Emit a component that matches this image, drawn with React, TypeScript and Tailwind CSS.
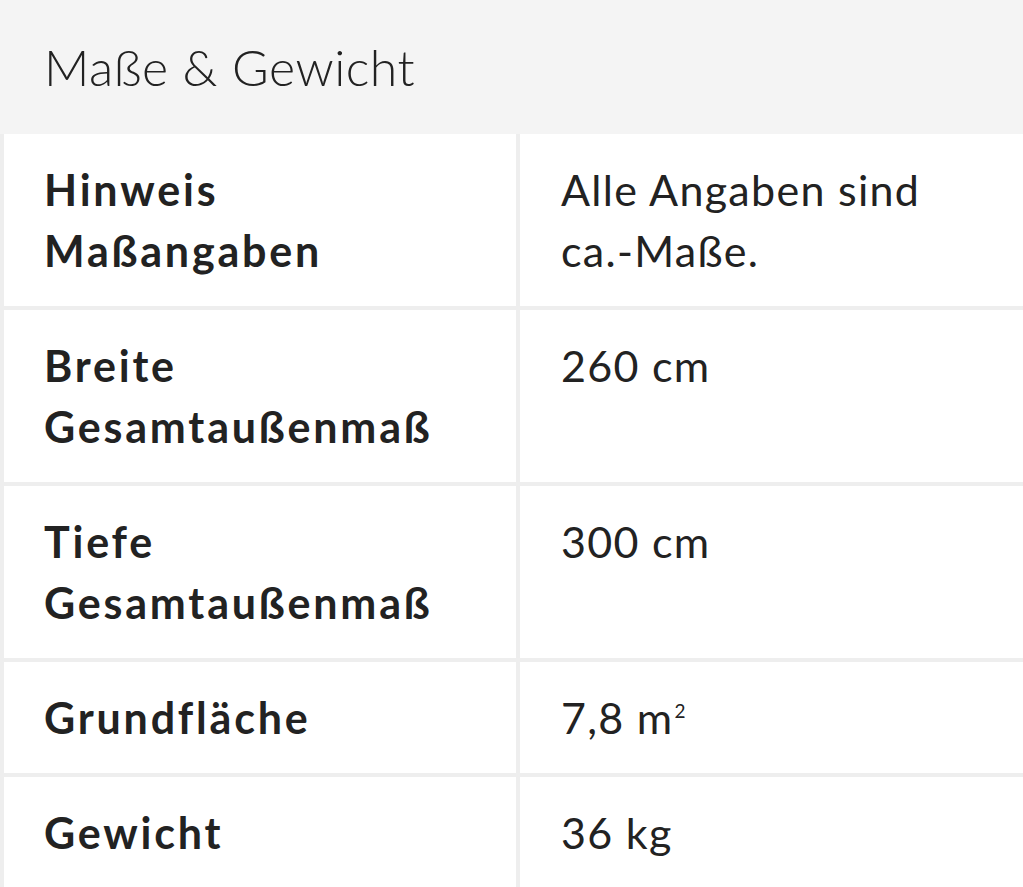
/**
 * Specs table - "Maße & Gewicht" section with label/value rows.
 */

const rows: { label: string; value: React.ReactNode }[] = [
  { label: 'Hinweis Maßangaben', value: 'Alle Angaben sind ca.-Maße.' },
  { label: 'Breite Gesamtaußenmaß', value: '260 cm' },
  { label: 'Tiefe Gesamtaußenmaß', value: '300 cm' },
  {
    label: 'Grundfläche',
    value: (
      <>
        7,8 m<span className="relative -top-[16px] ml-[1px] text-[19px] leading-none">2</span>
      </>
    ),
  },
  { label: 'Gewicht', value: '36 kg' },
];

function SpecRow({ label, value }: { label: string; value: React.ReactNode }) {
  return (
    <>
      <div className="bg-white px-[40px] py-[25px] text-[43px] font-bold leading-[61px] tracking-[2.8px] text-[#222]">
        {label.split(' ').map((word) => (
          <div key={word}>{word}</div>
        ))}
      </div>
      <div className="bg-white py-[25px] pl-[41px] pr-[60px] text-[43px] leading-[61px] tracking-[1.3px] text-[#222]">
        {value}
      </div>
    </>
  );
}

export default function App() {
  return (
    <div className="h-[887px] w-[1023px] overflow-hidden bg-[#f4f4f4] font-['Lato','Open_Sans',sans-serif]">
      <div className="flex h-[134px] items-center px-[44px]">
        <h2 className="text-[50px] font-light leading-none tracking-[0.5px] text-[#222]">Maße &amp; Gewicht</h2>
      </div>
      <div className="grid grid-cols-[512px_1fr] gap-[4px] bg-[#eeeeee] pl-[4px]">
        {rows.map((row) => (
          <SpecRow key={row.label} label={row.label} value={row.value} />
        ))}
      </div>
    </div>
  );
}
